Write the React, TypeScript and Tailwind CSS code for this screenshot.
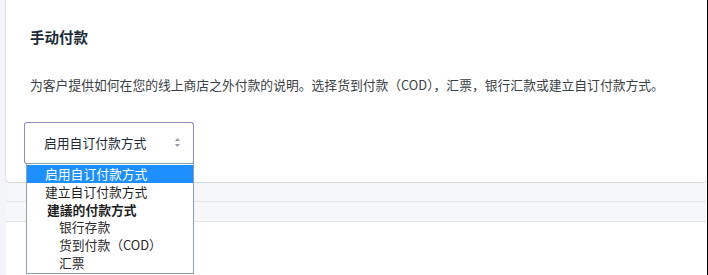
const font = '"Noto Sans CJK SC", "Microsoft YaHei", sans-serif';

const options: { label: string; bold?: boolean; indent?: boolean; active?: boolean }[] = [
  { label: '启用自订付款方式', active: true },
  { label: '建立自订付款方式' },
  { label: '建議的付款方式', bold: true },
  { label: '银行存款', indent: true },
  { label: '货到付款（COD）', indent: true },
  { label: '汇票', indent: true },
];

export default function App() {
  return (
    <div
      className="relative flex h-[275px] w-[708px] overflow-hidden bg-[#f4f5f8]"
      style={{ fontFamily: font }}
    >
      <div className="flex w-[706px] flex-col pl-[6px]">
        {/* manual payments card */}
        <section className="h-[182px] rounded-b-[4px] bg-white px-[24px] pt-[26px] shadow-[0_0_0_1px_rgba(63,63,68,0.06),0_1px_2px_rgba(63,63,68,0.12)]">
          <h2 className="text-[14.5px] font-bold leading-[22px] text-[#212b36]">手动付款</h2>
          <p className="mt-[27px] text-[12.8px] leading-[20px] text-[#3a3f45]">
            为客户提供如何在您的线上商店之外付款的说明。选择货到付款（COD），汇票，银行汇款或建立自订付款方式。
          </p>
          <div className="-ml-[6px] mt-[27px] flex h-[42px] w-[170px] items-center justify-between rounded-[3px] border border-[#8a8dbd] border-b-[#6d70a8] bg-white pl-[19px] pr-[12px] text-[12.8px] text-[#212b36]">
            <span>启用自订付款方式</span>
            <svg width="7" height="11" viewBox="0 0 7 11" className="mb-[2px]">
              <path d="M3.5 1 L6 4 H1 Z" fill="#919eab" />
              <path d="M3.5 10 L6 7 H1 Z" fill="#919eab" />
            </svg>
          </div>
        </section>

        {/* gap between cards */}
        <div className="mt-[1px] h-[19px] border-b border-[#e2e4e8] bg-[#f5f6f8]" />
        <div className="h-[20px] border-b border-[#e2e4e8] bg-[#f6f7f9]" />

        <section className="flex-1 rounded-t-[4px] bg-white" />
      </div>
      <div className="w-[1px] bg-white" />
      <div className="w-[1px] bg-black" />

      {/* open native dropdown */}
      <ul className="absolute left-[26px] top-[163px] w-[168px] border border-[#8b9fb8] bg-white py-[1px] text-[12.8px] text-[#1f1f1f]">
        {options.map((o) => (
          <li
            key={o.label}
            className={
              'h-[17.8px] whitespace-nowrap leading-[17.8px] ' +
              (o.active ? 'bg-[#1e8fff] pl-[18px] text-white ' : '') +
              (o.bold ? 'pl-[20px] font-bold ' : '') +
              (o.indent ? 'pl-[32px] text-[#2a2a2a] ' : '') +
              (!o.active && !o.bold && !o.indent ? 'pl-[18px] ' : '')
            }
          >
            {o.label}
          </li>
        ))}
      </ul>
    </div>
  );
}
